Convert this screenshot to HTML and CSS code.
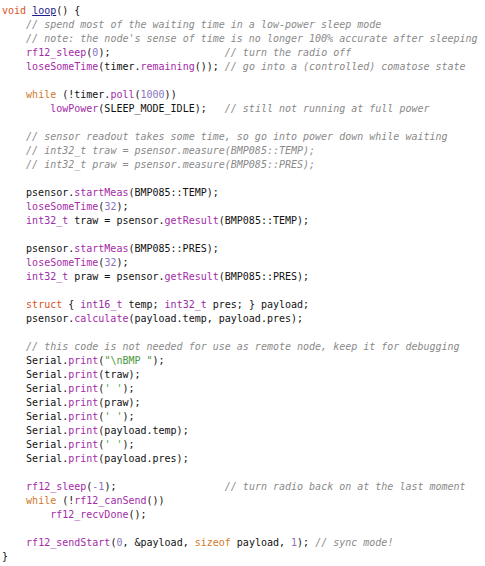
FILE: index.html
```html
<!DOCTYPE html>
<html>
<head>
<meta charset="utf-8">
<link rel="stylesheet" href="styles.css">
</head>
<body>
<pre class="code"><span class="kw">void</span> <span class="def">loop</span>() {
    <span class="cm">// spend most of the waiting time in a low-power sleep mode</span>
    <span class="cm">// note: the node's sense of time is no longer 100% accurate after sleeping</span>
    <span class="fn">rf12_sleep</span>(<span class="num">0</span>);                   <span class="cm">// turn the radio off</span>
    <span class="fn">loseSomeTime</span>(timer.<span class="fn">remaining</span>()); <span class="cm">// go into a (controlled) comatose state</span>

    <span class="kw2">while</span> (!timer.<span class="fn">poll</span>(<span class="num">1000</span>))
        <span class="fn">lowPower</span>(SLEEP_MODE_IDLE);   <span class="cm">// still not running at full power</span>

    <span class="cm">// sensor readout takes some time, so go into power down while waiting</span>
    <span class="cm">// int32_t traw = psensor.measure(BMP085::TEMP);</span>
    <span class="cm">// int32_t praw = psensor.measure(BMP085::PRES);</span>

    psensor.<span class="fn">startMeas</span>(BMP085::TEMP);
    <span class="fn">loseSomeTime</span>(<span class="num">32</span>);
    <span class="ty">int32_t</span> traw = psensor.<span class="fn">getResult</span>(BMP085::TEMP);

    psensor.<span class="fn">startMeas</span>(BMP085::PRES);
    <span class="fn">loseSomeTime</span>(<span class="num">32</span>);
    <span class="ty">int32_t</span> praw = psensor.<span class="fn">getResult</span>(BMP085::PRES);

    <span class="kw">struct</span> { <span class="ty">int16_t</span> temp; <span class="ty">int32_t</span> pres; } payload;
    psensor.<span class="fn">calculate</span>(payload.temp, payload.pres);

    <span class="cm">// this code is not needed for use as remote node, keep it for debugging</span>
    Serial.<span class="fn">print</span>(<span class="str">"\nBMP "</span>);
    Serial.<span class="fn">print</span>(traw);
    Serial.<span class="fn">print</span>(<span class="str">' '</span>);
    Serial.<span class="fn">print</span>(praw);
    Serial.<span class="fn">print</span>(<span class="str">' '</span>);
    Serial.<span class="fn">print</span>(payload.temp);
    Serial.<span class="fn">print</span>(<span class="str">' '</span>);
    Serial.<span class="fn">print</span>(payload.pres);

    <span class="fn">rf12_sleep</span>(<span class="num">-1</span>);                  <span class="cm">// turn radio back on at the last moment</span>
    <span class="kw2">while</span> (!<span class="fn">rf12_canSend</span>())
        <span class="fn">rf12_recvDone</span>();

    <span class="fn">rf12_sendStart</span>(<span class="num">0</span>, &amp;payload, <span class="kw2">sizeof</span> payload, <span class="num">1</span>); <span class="cm">// sync mode!</span>
}</pre>
</body>
</html>
```
FILE: styles.css
```css
html, body {
  margin: 0;
  padding: 0;
  background: #ffffff;
}
.code {
  margin: 0;
  padding: 4px 0 0 2px;
  font-family: "DejaVu Sans Mono", "Liberation Mono", monospace;
  font-size: 10px;
  line-height: 14px;
  color: #111111;
  white-space: pre;
}
.kw { color: #d9531e; }
.kw2 { color: #cf7a2c; }
.def { color: #1c1c8c; text-decoration: underline; }
.fn { color: #a42aa8; }
.ty { color: #9a2ca6; }
.num { color: #8a74c0; }
.str { color: #4a9a3c; }
.cm { color: #8a8a8a; font-style: italic; }
```
